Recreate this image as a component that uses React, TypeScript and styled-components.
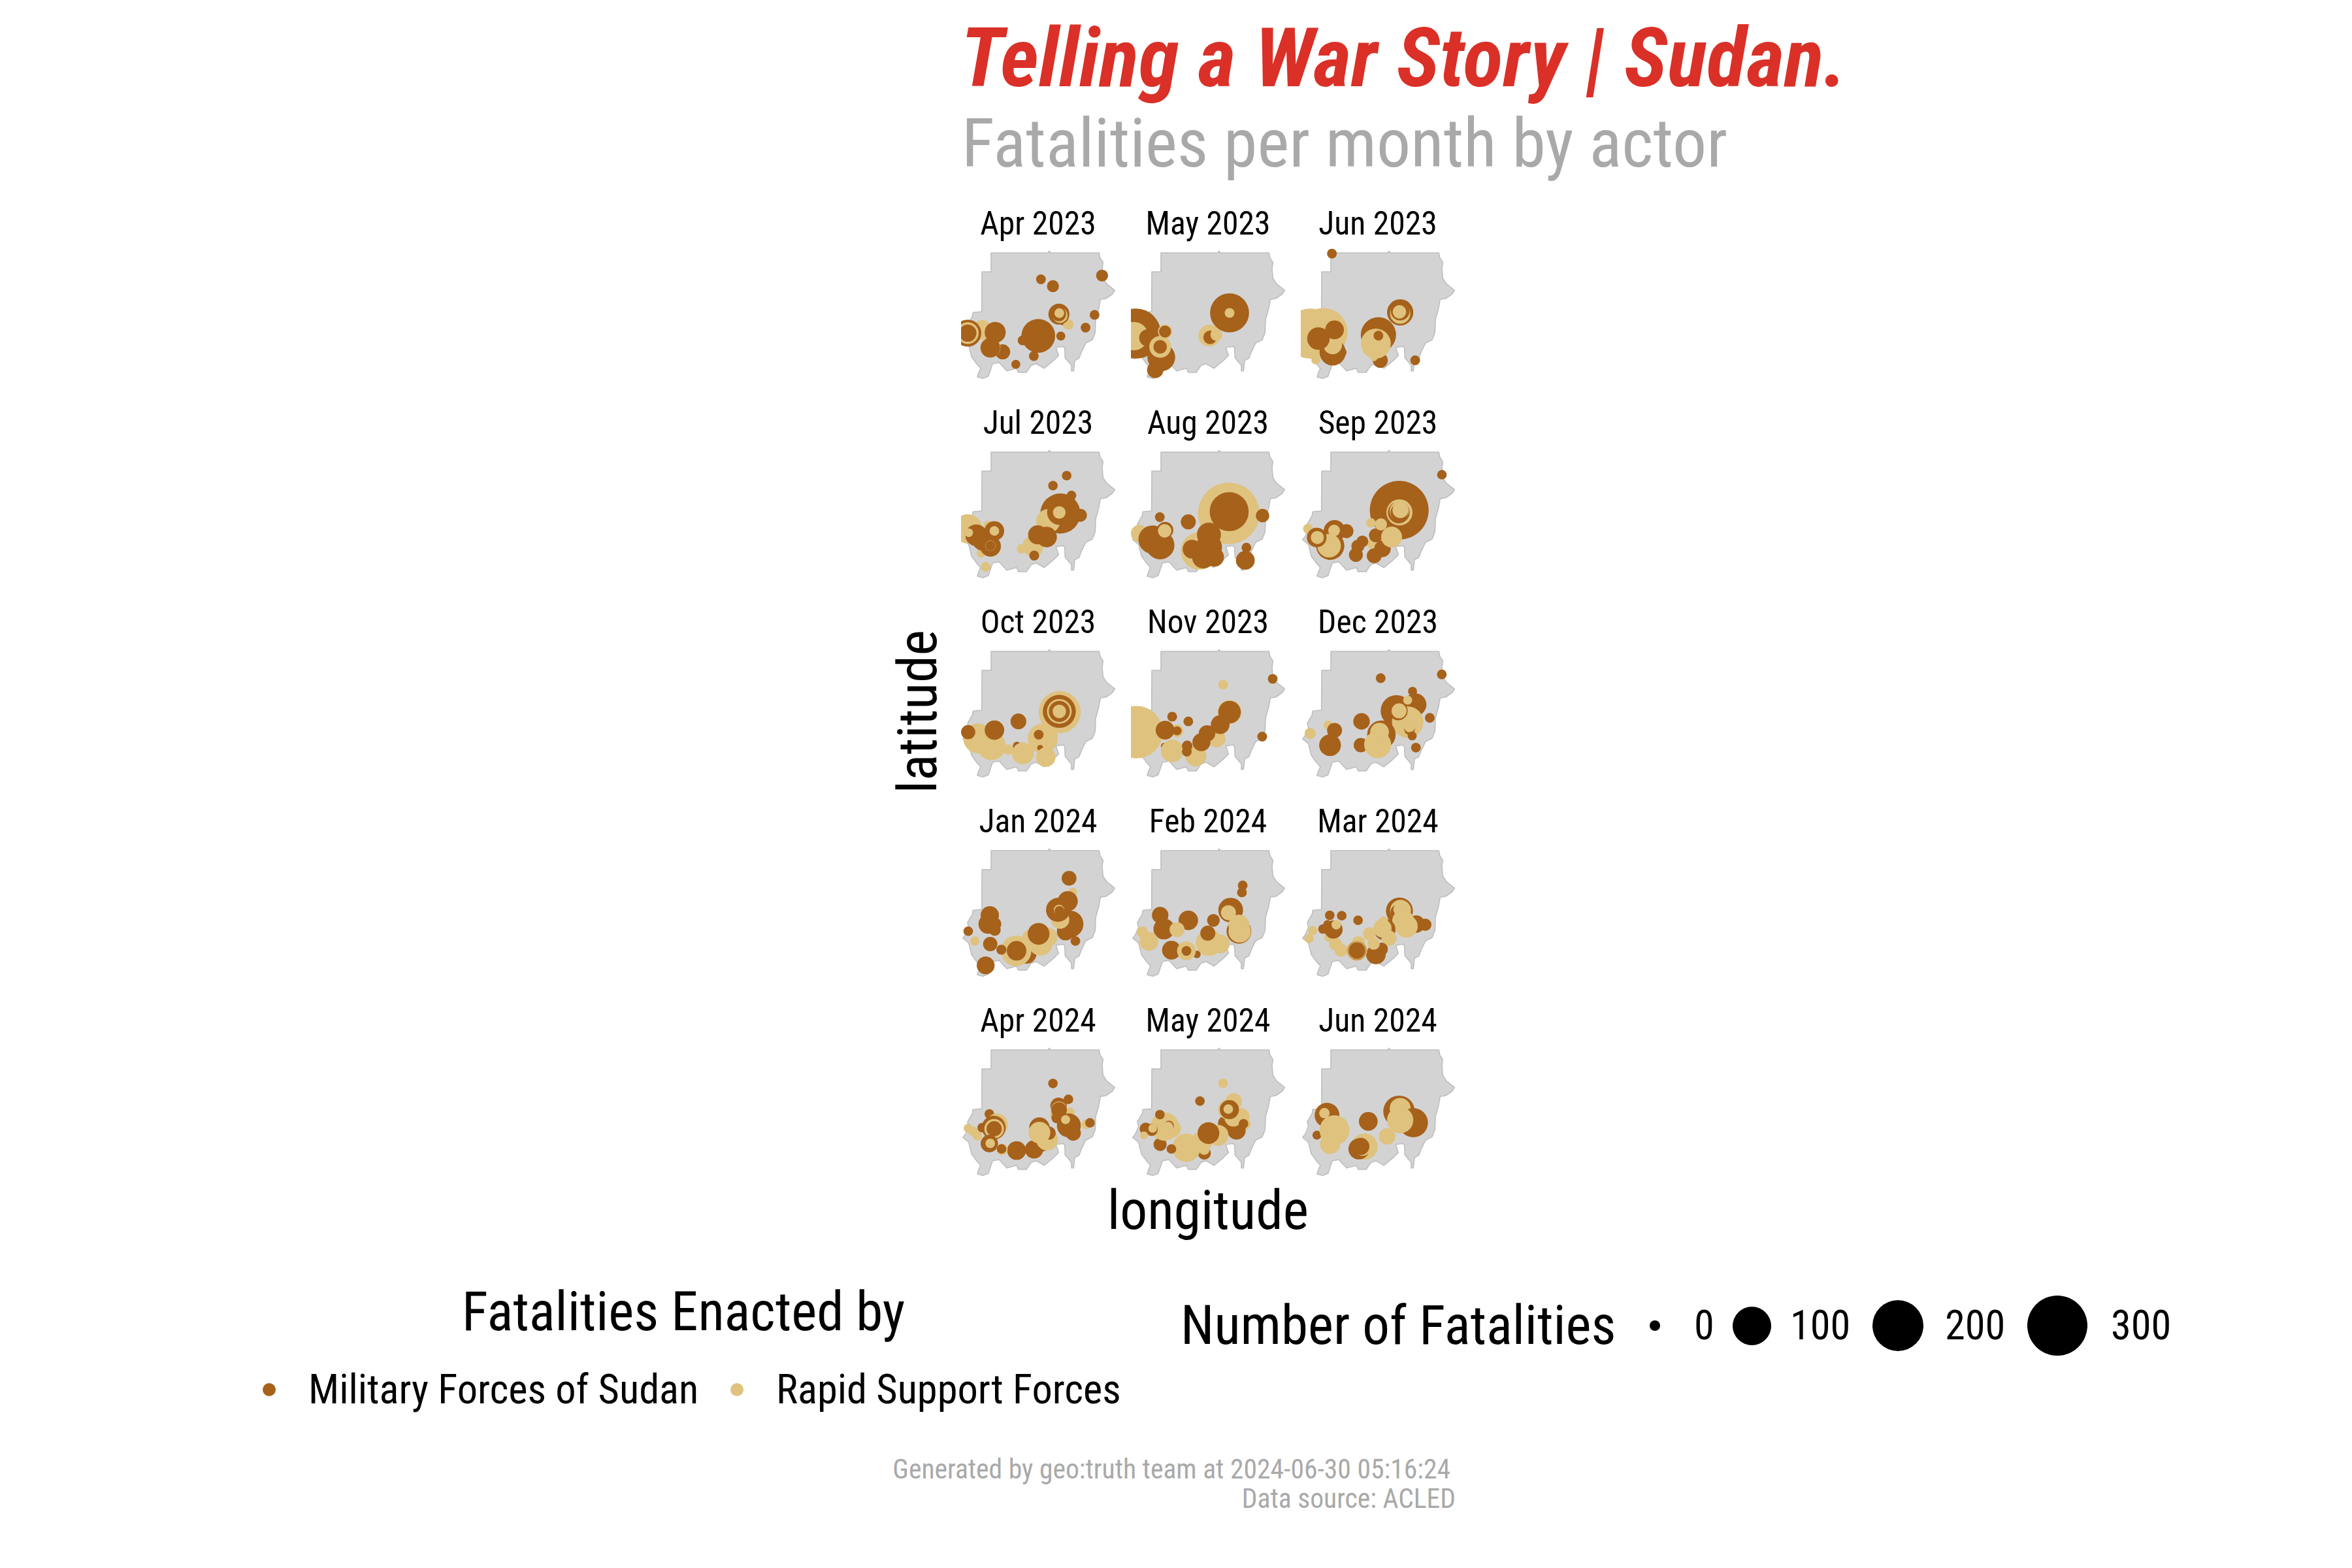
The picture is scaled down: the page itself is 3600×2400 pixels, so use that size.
import React from "react";
import styled, { createGlobalStyle } from "styled-components";

const BROWN = "#A6611A";
const TAN = "#DFC27D";

const Global = createGlobalStyle`
  html, body { margin: 0; padding: 0; background: #fff; }
  body { font-family: Roboto, "Liberation Sans", sans-serif; font-stretch: 75%; color: #000; }
`;

const Page = styled.div`
  width: 3600px;
  height: 2400px;
  display: flex;
  flex-direction: column;
  overflow: hidden;
`;
const Header = styled.header`
  margin-left: 1472px;
  padding-top: 13px;
`;
const Title = styled.h1`
  margin: 0 0 0 -2px;
  font-size: 126.5px;
  line-height: 152px;
  font-weight: 700;
  font-style: italic;
  color: #da3027;
  white-space: nowrap;
`;
const Subtitle = styled.h2`
  margin: 0;
  font-size: 104px;
  line-height: 110px;
  font-weight: 400;
  color: #a9a9a9;
  white-space: nowrap;
`;
const PlotRow = styled.section`
  display: flex;
  padding-top: 38px;
`;
const YAxisColumn = styled.div`
  width: 1471px;
  display: flex;
  justify-content: flex-end;
  align-items: center;
  padding-bottom: 36px;
  box-sizing: border-box;
`;
const YAxisLabel = styled.div`
  writing-mode: vertical-rl;
  transform: rotate(180deg);
  font-size: 84px;
  line-height: 100px;
  margin-right: 16px;
  white-space: nowrap;
`;
const PlotColumn = styled.div`
  display: flex;
  flex-direction: column;
  width: 756px;
`;
const PanelGrid = styled.div`
  display: grid;
  grid-template-columns: repeat(3, 236px);
  column-gap: 24px;
  row-gap: 32px;
`;
const Panel = styled.figure`
  margin: 0;
  width: 236px;
`;
const PanelLabel = styled.figcaption`
  font-size: 49.6px;
  line-height: 58px;
  height: 58px;
  text-align: center;
  white-space: nowrap;
`;
const PanelMap = styled.svg`
  display: block;
  width: 236px;
  height: 215px;
`;
const XAxisLabel = styled.div`
  margin-top: -4px;
  font-size: 83.6px;
  line-height: 100px;
  text-align: center;
  white-space: nowrap;
`;
const LegendRow = styled.section`
  display: flex;
  padding-top: 56px;
`;
const ActorLegend = styled.div`
  margin-left: 392px;
  width: 1415px;
  display: flex;
  flex-direction: column;
`;
const LegendTitle = styled.div<{ $indent?: number; $width?: number }>`
  font-size: 83px;
  line-height: 100px;
  white-space: nowrap;
  padding-left: ${(p) => p.$indent ?? 0}px;
  width: ${(p) => (p.$width ? `${p.$width}px` : "auto")};
`;
const ActorItems = styled.div`
  display: flex;
  margin-top: 29px;
  padding-left: 10px;
`;
const ActorItem = styled.div<{ $width: number }>`
  display: flex;
  align-items: center;
  width: ${(p) => p.$width}px;
  height: 80px;
  gap: 50px;
`;
const ActorDot = styled.span<{ $color: string }>`
  width: 20px;
  height: 20px;
  border-radius: 50%;
  background: ${(p) => p.$color};
  flex: none;
`;
const LegendText = styled.span`
  font-size: 62.4px;
  line-height: 80px;
  white-space: nowrap;
`;
const SizeLegend = styled.div`
  display: flex;
  align-items: center;
  height: 100px;
  margin-top: 21px;
`;
const SizeKey = styled.span<{ $size: number; $gap: number }>`
  width: ${(p) => p.$size}px;
  height: ${(p) => p.$size}px;
  margin-right: ${(p) => p.$gap}px;
  border-radius: 50%;
  background: #000;
  flex: none;
`;
const SizeLabel = styled(LegendText)<{ $width: number }>`
  width: ${(p) => p.$width}px;
  flex: none;
`;
const Caption = styled.footer`
  width: 2228px;
  margin-top: 59px;
  text-align: right;
  font-size: 41.6px;
  line-height: 45px;
  color: #a9a9a9;
`;
const CaptionLine = styled.div<{ $inset?: number }>`
  padding-right: ${(p) => p.$inset ?? 0}px;
  white-space: nowrap;
`;

const OUTLINE: [number, number][] = [
  [138,48],[400,48],[405,40],[410,48],[634,48],[638,70],[652,92],[648,120],[652,165],[668,190],[706,220],[695,237],[665,258],[640,262],[632,305],[618,355],[616,415],[603,447],[572,463],[552,505],[542,532],[522,542],[517,590],[507,590],[507,565],[478,530],[476,487],[470,478],[436,482],[448,520],[422,545],[382,578],[345,557],[322,565],[300,597],[263,597],[255,578],[210,590],[175,552],[145,557],[125,615],[100,625],[75,618],[80,600],[90,578],[72,558],[48,525],[35,472],[8,450],[20,435],[35,400],[30,378],[52,340],[55,322],[95,318],[96,135],[138,135],
];
const mapPath = OUTLINE.map(([x, y]) => `${(x / 3).toFixed(1)},${(y / 3).toFixed(1)}`).join(" ");

type C = [0 | 1, number, number, number];
type PanelData = { label: string; col?: number; top?: number; dots?: C[]; dots3?: C[] };

const PANELS: PanelData[] = [
  { label: "Apr 2023", col: 0, top: 1012, dots: [[1,110,1320,26],[0,72,1333,36],[1,72,1333,29],[0,72,1333,23],[0,165,1408,20],[1,132,1390,27],[0,132,1392,26],[0,145,1330,28],[0,218,1362,13],[0,260,1344,45],[0,320,1345,12],[0,248,1425,13],[0,200,1458,12],[0,267,1118,13],[0,299,1145,16],[0,430,1103,16],[0,410,1260,13],[0,386,1311,13],[0,328,1285,12],[1,340,1298,14],[0,315,1257,28],[1,318,1262,20],[0,315,1257,19],[1,316,1253,13]] },
  { label: "May 2023", col: 1, top: 1012, dots: [[0,520,1335,67],[1,515,1345,38],[0,552,1352,23],[0,588,1430,37],[0,572,1480,22],[1,585,1388,29],[0,585,1388,18],[1,598,1327,19],[0,598,1327,16],[0,770,1252,52],[1,770,1252,13],[1,716,1343,29],[0,718,1350,18],[1,735,1340,16]] },
  { label: "Jun 2023", col: 2, top: 1012, dots: [[0,1043,1015,13],[1,985,1335,67],[1,1020,1330,65],[1,1000,1440,12],[0,1045,1410,35],[0,1070,1410,12],[1,1045,1380,25],[0,1007,1355,30],[0,1050,1320,25],[0,1225,1250,35],[1,1225,1255,27],[0,1225,1245,25],[1,1223,1248,18],[0,1172,1442,20],[0,1167,1340,47],[1,1160,1375,40],[1,1155,1430,10],[0,1167,1343,13],[0,1265,1442,13]] },
  { label: "Jul 2023", dots3: [[1,30,400,67],[1,125,385,22],[1,92,512,20],[1,113,575,22],[0,70,430,50],[0,100,450,50],[0,135,480,48],[1,135,478,24],[0,135,478,23],[1,35,418,20],[0,153,410,45],[1,153,410,22],[0,485,156,22],[0,422,202,22],[0,507,247,22],[0,456,330,92],[0,548,338,30],[1,400,365,55],[0,452,325,57],[1,451,325,29],[1,330,480,48],[1,277,492,21],[0,352,428,44],[0,393,438,47],[0,336,523,23]] },
  { label: "Aug 2023", col: 1, top: 240, dots: [[1,768,485,82],[0,769,478,52],[0,858,494,18],[0,815,622,13],[0,812,673,25],[1,690,635,50],[0,660,519,20],[0,584,500,13],[1,530,565,23],[0,565,590,38],[0,585,612,38],[0,598,552,22],[1,597,555,18],[0,670,628,25],[0,715,570,32],[0,715,620,35],[0,700,660,30],[0,730,660,25]] },
  { label: "Sep 2023", dots3: [[0,648,152,22],[0,452,315,135],[1,453,325,60],[0,450,325,50],[1,452,318,44],[0,452,325,40],[1,457,315,36],[1,322,373,22],[1,325,470,22],[0,345,430,32],[1,368,380,28],[0,375,492,38],[0,337,524,34],[1,417,438,48],[0,283,458,27],[0,262,480,30],[0,253,520,32],[1,33,400,23],[0,210,411,32],[0,155,410,50],[0,135,478,65],[1,130,478,54],[1,153,408,27],[0,73,440,45],[1,76,440,30]] },
  { label: "Oct 2023", col: 0, top: 1037, dots: [[1,317,1280,56],[0,316,1277,44],[1,316,1277,33],[0,316,1277,28],[1,316,1277,18],[1,272,1385,40],[0,261,1370,13],[0,207,1317,21],[1,100,1385,40],[1,135,1415,38],[0,143,1352,26],[0,73,1360,19],[1,180,1430,14],[0,203,1415,11],[1,219,1445,29],[0,265,1423,8],[1,280,1460,26]] },
  { label: "Nov 2023", col: 1, top: 1037, dots: [[1,522,1360,70],[1,753,1170,13],[0,885,1147,13],[0,857,1378,13],[1,770,1280,32],[0,617,1298,13],[0,660,1317,13],[1,630,1355,17],[0,598,1352,25],[0,630,1355,12],[1,735,1385,24],[0,745,1330,25],[0,770,1280,30],[0,710,1365,22],[0,595,1415,8],[1,680,1455,28],[0,695,1400,24],[1,617,1435,30],[0,657,1415,14],[0,656,1438,13]] },
  { label: "Dec 2023", col: 2, top: 1037, dots: [[0,1336,1129,13],[0,1173,1144,13],[0,1258,1197,12],[0,1215,1275,42],[0,1265,1250,30],[1,1245,1232,12],[1,1245,1320,42],[0,1220,1275,25],[1,1222,1275,20],[0,1304,1303,13],[0,1250,1350,14],[1,1250,1340,14],[0,1257,1375,12],[0,1267,1422,13],[0,1122,1317,22],[0,1120,1412,19],[0,1175,1370,38],[1,1165,1410,36],[1,1170,1360,25],[1,1033,1332,12],[0,1050,1353,20],[1,985,1365,15],[0,1038,1412,29]] },
  { label: "Jan 2024", dots3: [[0,496,175,34],[1,513,238,20],[0,500,385,62],[0,480,420,40],[0,525,463,22],[1,455,365,42],[0,445,320,55],[0,490,280,46],[1,450,320,24],[0,452,325,23],[0,132,345,42],[0,125,385,45],[0,155,385,30],[0,155,412,27],[0,33,418,22],[1,63,463,21],[0,134,477,33],[0,113,575,41],[0,300,520,47],[1,320,450,40],[1,365,475,55],[1,400,445,43],[0,356,430,50],[1,253,508,70],[0,255,508,45],[0,185,503,23]] },
  { label: "Feb 2024", col: 1, top: 267, dots: [[0,805,406,13],[0,803,434,13],[0,773,505,33],[1,767,515,20],[0,795,590,33],[1,795,565,28],[1,797,590,30],[0,727,546,17],[1,715,635,35],[1,745,640,25],[0,712,597,20],[0,660,546,26],[0,585,525,22],[0,595,580,28],[1,630,583,20],[0,615,665,25],[0,683,682,10],[1,655,668,25],[0,655,668,13],[1,537,592,15],[1,555,630,25]] },
  { label: "Mar 2024", dots3: [[0,530,385,40],[0,572,388,28],[0,453,325,62],[1,458,322,48],[0,445,330,33],[1,455,318,30],[1,470,370,50],[1,485,395,52],[0,385,410,50],[1,375,405,42],[1,380,370,20],[1,405,450,35],[1,315,430,30],[0,345,525,45],[0,370,500,30],[1,335,475,28],[1,265,470,30],[1,185,505,30],[1,160,477,30],[1,130,445,22],[1,258,507,47],[0,258,507,43],[1,258,507,41],[0,258,507,38],[0,133,345,22],[0,188,347,22],[0,263,368,22],[0,150,410,42],[0,122,385,18],[0,102,408,22],[1,163,388,22],[1,55,415,21],[1,38,451,21]] },
  { label: "Apr 2024", dots3: [[0,422,202,22],[1,450,345,40],[1,500,335,22],[0,440,360,25],[0,495,395,55],[0,515,430,35],[0,448,305,38],[0,493,275,22],[1,450,322,37],[0,450,324,36],[1,480,368,21],[1,575,390,22],[0,592,383,22],[0,255,510,43],[0,335,505,42],[0,370,470,45],[1,395,460,50],[0,360,405,47],[0,405,430,30],[1,360,428,50],[1,32,408,20],[1,55,422,22],[1,75,442,22],[0,130,342,22],[1,165,390,50],[0,150,405,55],[0,97,405,22],[1,152,410,45],[0,152,410,35],[0,130,478,40],[1,134,477,22],[1,188,505,26],[0,186,503,22]] },
  { label: "May 2024", dots3: [[1,423,201,22],[0,317,283,22],[1,472,285,38],[1,505,355,40],[1,525,390,25],[0,435,385,35],[0,485,418,42],[1,470,360,40],[1,447,322,46],[0,452,322,44],[1,447,320,22],[0,517,387,22],[1,400,440,48],[1,325,470,48],[0,337,522,30],[1,337,505,25],[0,356,430,50],[1,255,497,65],[0,186,503,22],[0,134,482,30],[1,155,400,65],[1,190,410,40],[0,175,395,22],[1,170,402,24],[0,133,345,22],[0,68,410,28],[0,95,415,28],[1,60,440,18],[1,100,408,20]] },
  { label: "Jun 2024", col: 2, top: 1064, dots: [[0,1222,1310,42],[1,1225,1298,28],[0,1260,1355,39],[1,1225,1345,35],[1,1190,1410,22],[0,1140,1350,25],[1,1130,1450,35],[0,1115,1460,28],[1,1125,1455,22],[0,1120,1450,23],[0,1030,1325,33],[1,1023,1317,14],[0,1003,1405,12],[1,1050,1385,40],[1,1038,1440,27]] },
];

function circlesOf(d: PanelData): C[] {
  if (d.dots3) return d.dots3.map(([c, x, y, r]) => [c, x / 3, y / 3, r / 3] as C);
  return (d.dots ?? []).map(
    ([c, x, y, r]) =>
      [c, (x - (d.col ?? 0) * 453 - 54) / 1.742, (y - (d.top ?? 0)) / 2.613 + 16, r / 1.742] as C,
  );
}

function MapPanel({ data }: { data: PanelData }) {
  return (
    <Panel>
      <PanelLabel>{data.label}</PanelLabel>
      <PanelMap viewBox="0 0 236 215">
        <polygon points={mapPath} fill="#D3D3D3" stroke="#BEBEBE" strokeWidth="1.6" strokeLinejoin="round" />
        {circlesOf(data).map(([c, x, y, r], i) => (
          <circle key={i} cx={x} cy={y} r={r} fill={c === 0 ? BROWN : TAN} />
        ))}
      </PanelMap>
    </Panel>
  );
}

export default function App() {
  return (
    <Page>
      <Global />
      <Header>
        <Title>Telling a War Story | Sudan.</Title>
        <Subtitle>Fatalities per month by actor</Subtitle>
      </Header>
      <PlotRow>
        <YAxisColumn>
          <YAxisLabel>latitude</YAxisLabel>
        </YAxisColumn>
        <PlotColumn>
          <PanelGrid>
            {PANELS.map((p) => (
              <MapPanel key={p.label} data={p} />
            ))}
          </PanelGrid>
          <XAxisLabel>longitude</XAxisLabel>
        </PlotColumn>
      </PlotRow>
      <LegendRow>
        <ActorLegend>
          <LegendTitle $indent={315}>Fatalities Enacted by</LegendTitle>
          <ActorItems>
            <ActorItem $width={716}>
              <ActorDot $color={BROWN} />
              <LegendText>Military Forces of Sudan</LegendText>
            </ActorItem>
            <ActorItem $width={600}>
              <ActorDot $color={TAN} />
              <LegendText>Rapid Support Forces</LegendText>
            </ActorItem>
          </ActorItems>
        </ActorLegend>
        <SizeLegend>
          <LegendTitle $width={718}>Number of Fatalities</LegendTitle>
          <SizeKey $size={16} $gap={52} />
          <SizeLabel $width={59}>0</SizeLabel>
          <SizeKey $size={59} $gap={29} />
          <SizeLabel $width={126}>100</SizeLabel>
          <SizeKey $size={78} $gap={33} />
          <SizeLabel $width={126}>200</SizeLabel>
          <SizeKey $size={92} $gap={36} />
          <SizeLabel $width={90}>300</SizeLabel>
        </SizeLegend>
      </LegendRow>
      <Caption>
        <CaptionLine $inset={8}>Generated by geo:truth team at 2024-06-30 05:16:24</CaptionLine>
        <CaptionLine>Data source: ACLED</CaptionLine>
      </Caption>
    </Page>
  );
}
